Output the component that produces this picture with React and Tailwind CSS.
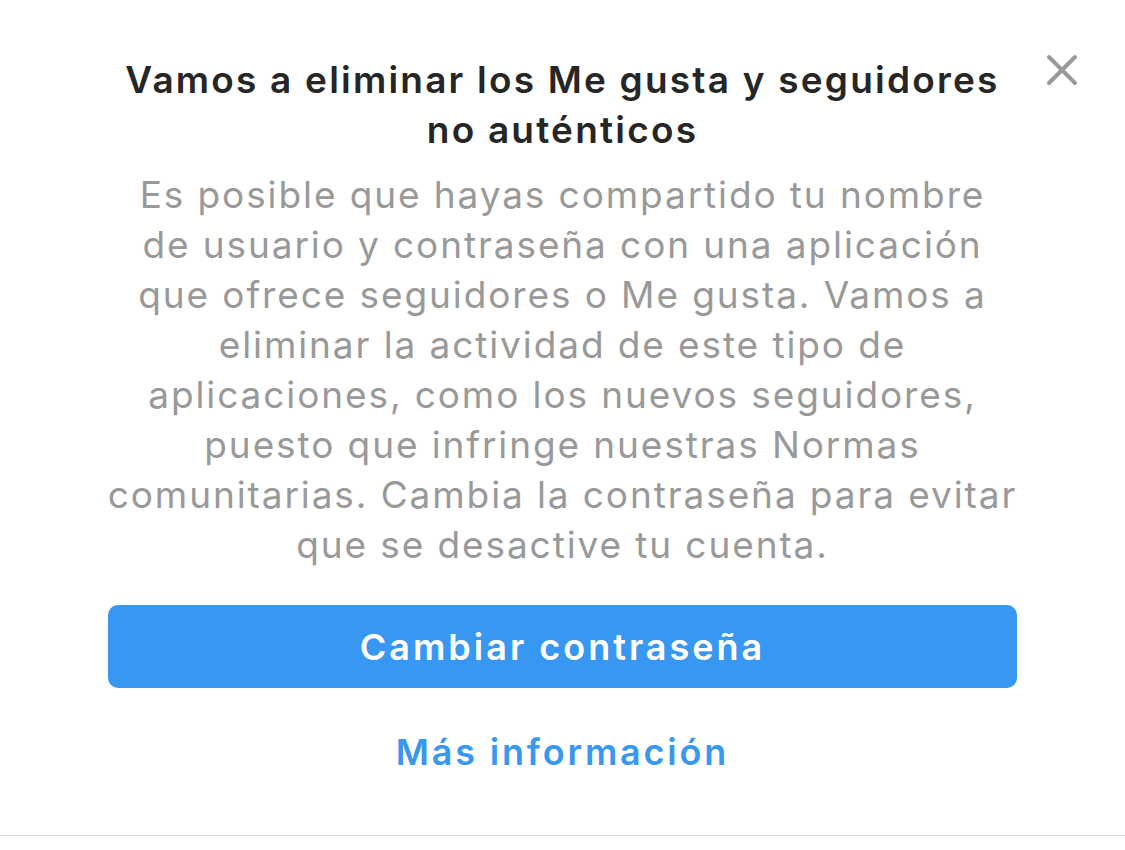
export default function App() {
  return (
    <div
      className="relative w-[1125px] h-[850px] bg-white overflow-hidden"
      style={{ fontFamily: "Inter, 'Noto Sans', sans-serif" }}
    >
      <button className="absolute left-[1046px] top-[54px] w-8 h-8 flex items-center justify-center">
        <svg width="32" height="32" viewBox="0 0 32 32">
          <path d="M3 3 L29 29 M29 3 L3 29" stroke="#999999" strokeWidth="4" strokeLinecap="round" />
        </svg>
      </button>

      <div className="flex flex-col items-center pt-[55px]">
        <h1 className="text-[37px] leading-[50px] font-semibold text-[#262626] text-center tracking-[2.2px]">
          Vamos a eliminar los Me gusta y seguidores
          <br />
          no auténticos
        </h1>

        <p className="mt-[15px] text-[37px] leading-[50px] text-[#999999] text-center tracking-[1.9px]">
          Es posible que hayas compartido tu nombre
          <br />
          de usuario y contraseña con una aplicación
          <br />
          que ofrece seguidores o Me gusta. Vamos a
          <br />
          eliminar la actividad de este tipo de
          <br />
          aplicaciones, como los nuevos seguidores,
          <br />
          puesto que infringe nuestras Normas
          <br />
          comunitarias. Cambia la contraseña para evitar
          <br />
          que se desactive tu cuenta.
        </p>

        <button className="mt-[35px] w-[909px] h-[83px] rounded-[10px] bg-[#3897f0] text-white text-[36px] font-semibold tracking-[3px] flex items-center justify-center">
          Cambiar contraseña
        </button>

        <button className="mt-[37px] h-[50px] text-[36px] font-semibold text-[#3897f0] tracking-[2.8px]">
          Más información
        </button>
      </div>

      <div className="mt-[60px] border-t border-[#dbdbdb]" />
    </div>
  );
}
